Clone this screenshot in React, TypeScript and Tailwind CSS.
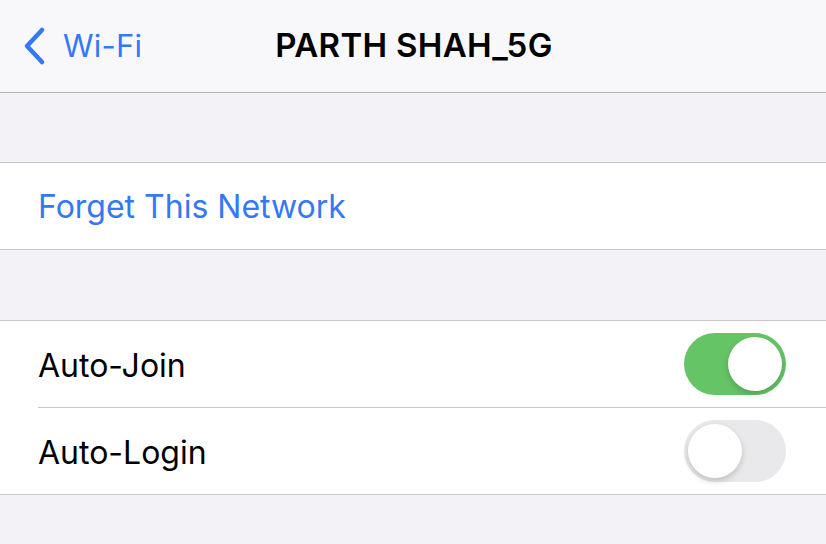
import React from "react";

function Toggle({ on }: { on: boolean }) {
  return (
    <div
      className={
        "relative w-[102px] h-[62px] rounded-full " +
        (on ? "bg-[#65c466]" : "bg-[#e9e9eb]")
      }
    >
      <div
        className={
          "absolute top-[4px] w-[54px] h-[54px] rounded-full bg-white shadow-[0_3px_6px_rgba(0,0,0,0.18)] " +
          (on ? "left-[44px]" : "left-[4px]")
        }
      />
    </div>
  );
}

export default function App() {
  return (
    <div
      className="w-[826px] h-[544px] overflow-hidden bg-[#f2f2f7] flex flex-col"
      style={{ fontFamily: "Inter, 'Noto Sans', sans-serif" }}
    >
      <div className="h-[93px] bg-[#f8f8fa] border-b border-[#b3b3b6] relative flex items-center justify-center shrink-0">
        <div className="absolute left-[22px] top-0 h-full flex items-center gap-[15px] text-[#3478f6]">
          <svg width="26" height="40" viewBox="0 0 26 40">
            <path
              d="M20 4 L5 20 L20 36"
              fill="none"
              stroke="#3478f6"
              strokeWidth="4.5"
              strokeLinecap="round"
              strokeLinejoin="round"
            />
          </svg>
          <span className="text-[31px] tracking-[0.2px]">Wi-Fi</span>
        </div>
        <span className="text-[33px] font-semibold text-black tracking-[0.3px] ml-[2px]">PARTH SHAH_5G</span>
      </div>
      <div className="h-[69px] shrink-0" />
      <div className="bg-white border-y border-[#c8c7cc] shrink-0">
        <div className="h-[86px] flex items-center pl-[38px] pt-[2px] text-[32px] text-[#3478f6]">
          Forget This Network
        </div>
      </div>
      <div className="h-[70px] shrink-0" />
      <div className="bg-white border-y border-[#c8c7cc] shrink-0">
        <div className="h-[86px] flex items-center justify-between pl-[38px] pr-[40px]">
          <span className="text-[32px] text-black pt-[3px]">Auto-Join</span>
          <Toggle on={true} />
        </div>
        <div className="ml-[38px] h-px bg-[#c8c7cc]" />
        <div className="h-[86px] flex items-center justify-between pl-[38px] pr-[40px]">
          <span className="text-[32px] text-black pt-[3px]">Auto-Login</span>
          <Toggle on={false} />
        </div>
      </div>
    </div>
  );
}
